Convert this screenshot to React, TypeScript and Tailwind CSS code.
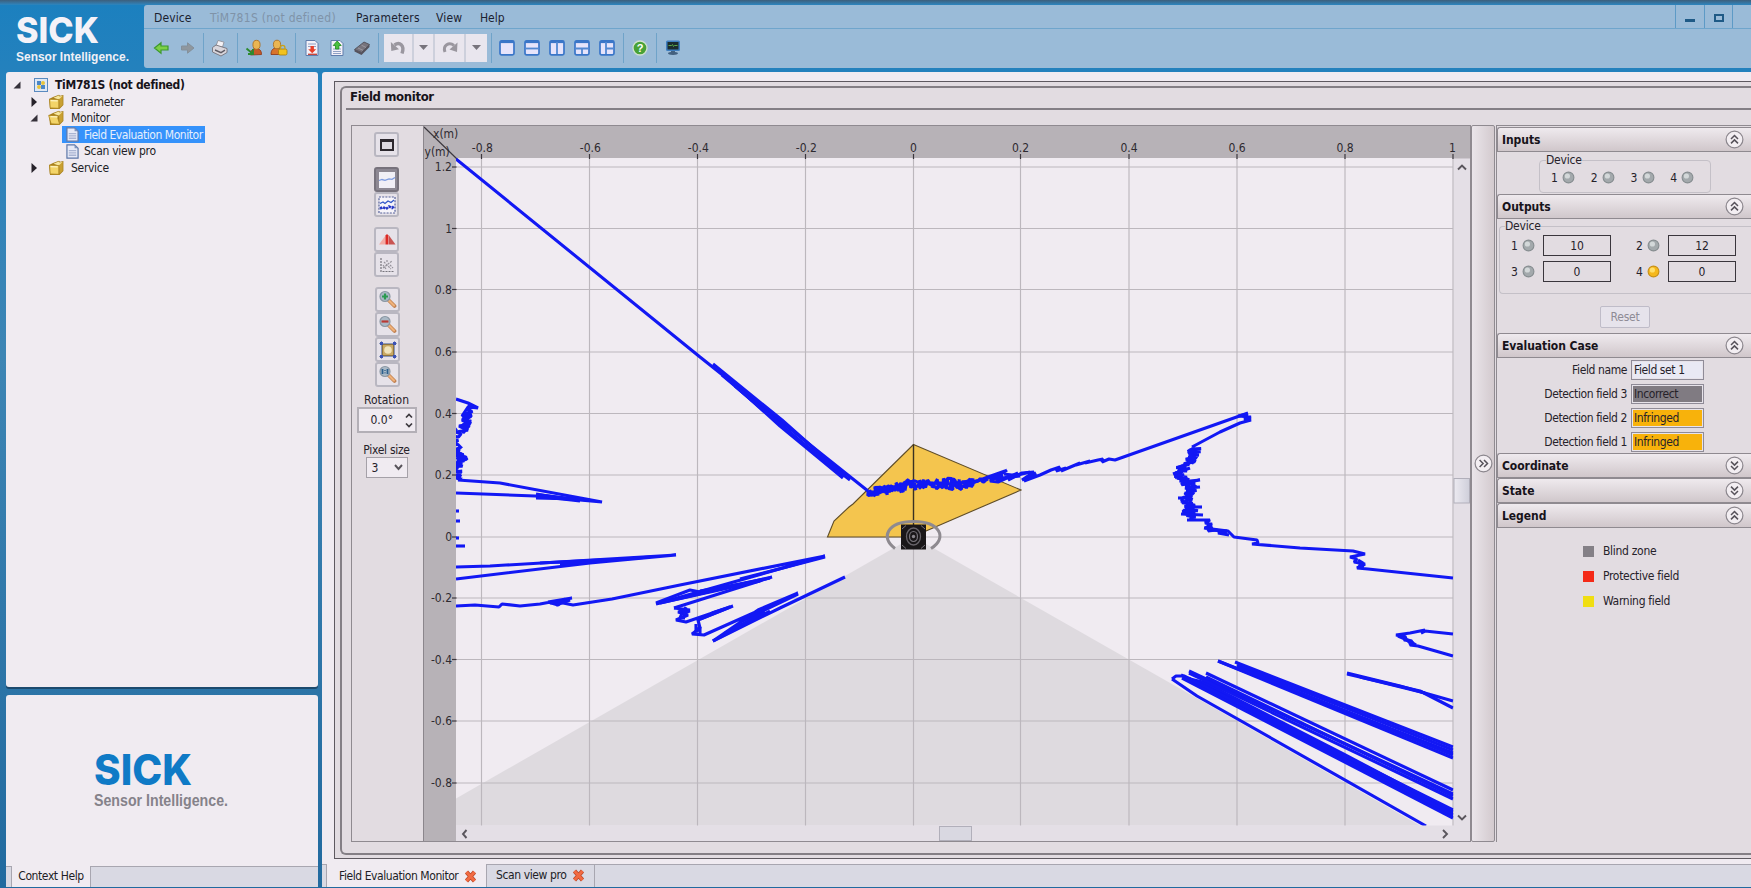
import React from "react";

type P = [number, number];

/* ---------- small building blocks ---------- */

function Ico({ children, size = 18, box = "0 0 18 18" }: { children?: React.ReactNode; size?: number; box?: string }) {
  return (
    <svg width={size} height={size} viewBox={box} fill="none" className="block shrink-0">
      {children}
    </svg>
  );
}

const Folder = ({ open = false }: { open?: boolean }) => (
  <Ico size={16} box="0 0 16 16">
    <path d="M5 3 11 .8l1 1L15.400 1v10L11.500 15H2L1 5z" fill="#a8801c" />
    <path d="M11 3.200 14.700 1.900v9L11.300 13.800z" fill="#c9a032" />
    <path d="M5.500 3.800 10.800 1.600l.7 1 3-.7-3.800 3.600z" fill="#f7e79e" />
    <path d={open ? "M.6 5.400l8.400.2 2.600 8.600-8.400-.4z" : "M1.600 5.200l9.200.3v8.800l-8.600-.4z"} fill="#f3d468" stroke="#a8801c" strokeWidth=".7" />
    <path d="M2.600 6.600l7 .2" stroke="#fdf3c0" strokeWidth="1.200" />
  </Ico>
);

const Doc = () => (
  <svg width="13" height="15" viewBox="0 0 14 16" className="block shrink-0">
    <path d="M1 .8h8.200L13 4.600v10.600H1z" fill="#e6e9f6" stroke="#5d77a8" strokeWidth="1.300" />
    <path d="M9.200.8v3.800H13z" fill="#7d93be" />
    <path d="M3 7h8M3 9.500h8M3 12h8" stroke="#a9b4d2" strokeWidth="1.500" />
  </svg>
);

const Closed = () => (
  <svg width="7" height="10" viewBox="0 0 7 10" className="block shrink-0"><path d="M.5 0 6 5 .5 10z" fill="#26222a" /></svg>
);
const Opened = () => (
  <svg width="8" height="8" viewBox="0 0 8 8" className="block shrink-0"><path d="M7.500.5v7h-7z" fill="#35313a" /></svg>
);

function Sep() {
  return <div className="h-[30px] w-px bg-[#6fa3c9]" />;
}

function LayoutIcon({ d }: { d: string }) {
  return (
    <Ico>
      <rect x="2" y="1.800" width="14" height="14" rx="1.600" fill="#e6e4fb" stroke="#3a76c8" strokeWidth="1.700" />
      <path d="M2 3h14" stroke="#3a76c8" strokeWidth="2.200" />
      <path d={d} stroke="#5288d2" strokeWidth="1.800" />
    </Ico>
  );
}

function Chevrons({ dir }: { dir: "up" | "down" | "right" }) {
  const turn = dir === "up" ? 0 : dir === "down" ? 180 : 90;
  return (
    <svg width="19" height="19" viewBox="0 0 19 19" className="block shrink-0">
      <circle cx="9.500" cy="9.500" r="8.400" fill="#f3eef2" stroke="#8b868d" strokeWidth="1.200" />
      <g transform={`rotate(${turn} 9.5 9.5)`} fill="none" stroke="#57525a" strokeWidth="1.500">
        <path d="M6 9l3.500-3.500L13 9M6 13.400l3.500-3.500 3.500 3.500" />
      </g>
    </svg>
  );
}

function Led({ on = false }: { on?: boolean }) {
  return (
    <svg width="13" height="13" viewBox="0 0 13 13" className="block shrink-0">
      <circle cx="6.500" cy="6.500" r="5.400" fill={on ? "#f5b81c" : "#a3a9ac"} stroke={on ? "#c89018" : "#868d90"} strokeWidth="1.100" />
      <circle cx="5.400" cy="5" r="2.600" fill={on ? "#ffdf6a" : "#d3d8d9"} />
    </svg>
  );
}

function SectionHeader({ title, dir }: { title: string; dir: "up" | "down" }) {
  return (
    <div className="flex h-[25px] shrink-0 items-center rounded-tl-[3px] border border-r-0 border-[#8f8a90] bg-linear-to-b from-[#efeaee] to-[#d0c7cb] pr-[7px] pl-[4px]">
      <span className="flex-1 text-[12px] font-bold tracking-[-0.05px] text-[#17131a]">{title}</span>
      <Chevrons dir={dir} />
    </div>
  );
}

function ToolBtn({ active = false, children }: { active?: boolean; children: React.ReactNode }) {
  return (
    <div
      className={
        active
          ? "flex h-[25px] w-[25px] items-center justify-center rounded-[3px] border-2 border-[#77727c] bg-[#8d8893]"
          : "flex h-[25px] w-[25px] items-center justify-center rounded-[3px] border-2 border-[#b9b7c1] bg-[#e6e2e9]"
      }
    >
      {children}
    </div>
  );
}

/* ---------- header ---------- */

function Header() {
  return (
    <div className="flex h-[63px] shrink-0">
      <div className="w-[144px] pl-[14px]">
        <svg width="124" height="62" className="block">
          <text x="2" y="38" textLength="83" lengthAdjust="spacingAndGlyphs" className="fill-[#f4f2f8] font-[Inter,sans-serif] text-[36px] font-extrabold">SICK</text>
          <text x="2" y="55.500" textLength="113" lengthAdjust="spacingAndGlyphs" className="fill-[#f0f0f6] font-['Liberation_Sans_Narrow','Liberation_Sans',sans-serif] text-[13.500px] font-bold">Sensor Intelligence.</text>
        </svg>
      </div>
      <div className="flex flex-1 flex-col rounded-l-[3px] bg-[#9abbd8]">
        <div className="flex h-[24px] border-b border-[#6fa5cc] pl-[10px]">
          <div className="flex flex-1 items-center pt-[2px] text-[12px] text-[#1b2230]">
            <span className="w-[56px] tracking-[0.1px]">Device</span>
            <span className="w-[146px] tracking-[0.3px] text-[#7f93a8]">TiM781S (not defined)</span>
            <span className="w-[80px] tracking-[0.2px]">Parameters</span>
            <span className="w-[44px] tracking-[0.2px]">View</span>
            <span>Help</span>
          </div>
          <div className="flex w-[76px]">
            <div className="flex w-[29px] items-center justify-center border-l border-[#5d9ac6]"><div className="mt-[7px] h-[3px] w-[10px] bg-[#1f5a86]" /></div>
            <div className="flex w-[29px] items-center justify-center border-x border-[#5d9ac6]"><div className="mt-[2px] h-[8px] w-[10px] border-2 border-[#1f5a86]" /></div>
          </div>
        </div>
        <div className="flex h-[39px] items-center pb-[2px] pl-[9px]">
          <Ico><path d="M1.500 9 8 3.800V7h7v4H8v3.200z" fill="#7dd048" stroke="#3d9a2c" strokeWidth="1.200" /></Ico>
          <div className="w-[7px]" />
          <Ico><path d="M16 9 9.500 3.800V7H3.500v4h6v3.200z" fill="#8f979e" stroke="#84909b" strokeWidth="1" /></Ico>
          <div className="w-[7px]" />
          <Sep />
          <div className="w-[7px]" />
          <Ico>
            <path d="M5 7 7 1.500l6 1.600L11.500 8z" fill="#f4f2f6" stroke="#8c8a92" strokeWidth=".8" />
            <path d="M1.500 8.500 5 6l11 3.500v4L10 17l-8.500-4z" fill="#d9d6dc" stroke="#75737b" strokeWidth=".9" />
            <path d="M4 11l6 2.600 4-2.400" stroke="#5e5c65" strokeWidth="1.400" />
          </Ico>
          <div className="w-[8px]" />
          <Sep />
          <div className="w-[7px]" />
          <Ico>
            <path d="M5.500 16c0-4.500 2-6.500 5.500-6.500s5.500 2 5.500 6z" fill="#c65a28" stroke="#8d3410" strokeWidth=".8" />
            <ellipse cx="11.500" cy="5.800" rx="3.600" ry="4.500" fill="#eab552" stroke="#a8691a" strokeWidth=".8" />
            <path d="M1.500 9.500l6 5M8 10v5H3" stroke="#2c8a2e" strokeWidth="1.900" />
          </Ico>
          <div className="w-[7px]" />
          <Ico>
            <path d="M1 15.500c0-4.500 2-6.500 5.500-6.500s5.500 2 5.500 6.500z" fill="#d8742a" stroke="#8d3410" strokeWidth=".8" />
            <ellipse cx="7" cy="5.500" rx="3.600" ry="4.300" fill="#eab552" stroke="#a8691a" strokeWidth=".8" />
            <rect x="8.500" y="10" width="8.500" height="6" rx="1.500" fill="#f2c21e" stroke="#a57b0a" strokeWidth=".8" />
            <path d="M10.500 10V8.500a2.200 2.200 0 0 1 4.400 0V10" stroke="#c9a11a" strokeWidth="1.300" />
          </Ico>
          <div className="w-[7px]" />
          <Sep />
          <div className="w-[7px]" />
          <Ico>
            <path d="M3 1.500h9l3 3v12H3z" fill="#f3f1f8" stroke="#5f7dac" />
            <path d="M5 5h8M5 7.500h8" stroke="#8fa0c4" />
            <path d="M7.500 7h3.400v3.300h2.300l-4 4-4-4h2.300z" fill="#e8402a" />
            <path d="M5 15.300h9" stroke="#c9463c" strokeWidth="1.400" />
          </Ico>
          <div className="w-[7px]" />
          <Ico>
            <path d="M3 1.500h9l3 3v12H3z" fill="#f3f1f8" stroke="#5f7dac" />
            <path d="M5 10h8M5 12.500h8M5 14.500h8" stroke="#8fa0c4" />
            <path d="M7.500 10V6.500H5.200L9.200 2l4 4.500h-2.300V10z" fill="#4cc040" stroke="#1d8a1c" strokeWidth=".8" />
          </Ico>
          <div className="w-[7px]" />
          <Ico>
            <path d="M1.500 10.500 11 3l5.500 2.500L8.500 13.500z" fill="#77747d" stroke="#4a4750" strokeWidth=".8" />
            <path d="M1.500 10.500v2l7 3.500v-2.500zM8.500 13.500V16l8-8V5.500z" fill="#55525c" />
            <path d="M5 9l5 2.300M8.500 6.200l4.500 2.300" stroke="#9b98a1" />
          </Ico>
          <div className="w-[7px]" />
          <Sep />
          <div className="ml-[5px] flex h-[28px] divide-x-2 divide-[#cdd0dc] bg-[#e9e6ee]">
            <div className="flex w-[30px] items-center justify-center"><Ico><path d="M5.500 6c5-3.500 10.500 0 7.500 8.500" stroke="#9a979f" strokeWidth="3.400" /><path d="M1.800 3 2.300 12l7.700-1.800z" fill="#9a979f" /></Ico></div>
            <div className="flex w-[21px] items-center justify-center"><svg width="9" height="5"><path d="M0 0h9L4.500 5z" fill="#77747c" /></svg></div>
            <div className="flex w-[31px] items-center justify-center"><Ico><path d="M4 13C1.500 6.500 8 2.500 13 6.500" stroke="#9a979f" strokeWidth="3" /><path d="M16.500 3.500 16 13l-7.500-2.600z" fill="#9a979f" /></Ico></div>
            <div className="flex w-[21px] items-center justify-center"><svg width="9" height="5"><path d="M0 0h9L4.500 5z" fill="#77747c" /></svg></div>
          </div>
          <div className="ml-[4px]"><Sep /></div>
          <div className="ml-[6px] flex gap-[7px]">
            <LayoutIcon d="" />
            <LayoutIcon d="M2 9.500h14" />
            <LayoutIcon d="M9 3v12" />
            <LayoutIcon d="M2 9.500h14M9 9.500V15" />
            <LayoutIcon d="M8 3v12M8 9.500h8" />
          </div>
          <div className="ml-[7px]"><Sep /></div>
          <div className="ml-[7px]">
            <Ico>
              <circle cx="9" cy="9" r="7" fill="#48a236" stroke="#cfe0d0" strokeWidth="1.300" />
              <text x="9" y="13" textAnchor="middle" className="fill-white font-['Liberation_Sans',sans-serif] text-[11px] font-bold">?</text>
            </Ico>
          </div>
          <div className="ml-[7px]"><Sep /></div>
          <div className="ml-[7px]">
            <Ico>
              <rect x="2" y="1.500" width="14" height="10.500" rx="1.500" fill="#3f7fc0" />
              <rect x="3.500" y="3" width="11" height="7.500" fill="#1b2b2e" />
              <path d="M4.500 6.500h3l1-1 1 2 1-1h3" stroke="#58a84a" />
              <path d="M7 12h4v1c4 0 4.500 3-2 3s-6-3-2-3z" fill="#44617f" />
            </Ico>
          </div>
        </div>
      </div>
    </div>
  );
}

/* ---------- left column ---------- */

function Sidebar() {
  return (
    <div className="ml-[6px] flex w-[312px] shrink-0 flex-col">
      <div className="flex h-[615px] flex-col rounded-[3px] bg-[#f0ebf1] pt-[4px] text-[12px] tracking-[-0.3px] text-[#211d26] shadow-[0_2px_0_#1c4a6e]">
        <div className="flex h-[17px] items-center pl-[7px]">
          <Opened />
          <div className="mr-[7px] ml-[13px] flex h-[14px] w-[14px] shrink-0 flex-wrap border border-[#5a8abf] bg-[#dfe8f4] p-[2px]">
            <div className="h-[4px] w-[4px] bg-[#4a86c8]" /><div className="h-[4px] w-[4px] rounded-full bg-[#e9c43a]" />
            <div className="h-[4px] w-[4px] rounded-full bg-[#e9c43a]" /><div className="h-[4px] w-[4px] bg-[#4a86c8]" />
          </div>
          <span className="font-bold text-[#17131a]">TiM781S (not defined)</span>
        </div>
        <div className="flex h-[17px] items-center pl-[25px]"><Closed /><span className="w-[10px]" /><Folder /><span className="ml-[7px]">Parameter</span></div>
        <div className="flex h-[16px] items-center pl-[24px]"><Opened /><span className="w-[10px]" /><Folder open /><span className="ml-[7px]">Monitor</span></div>
        <div className="ml-[56px] flex h-[17px] w-[143px] items-center bg-[#3592fb] pl-[4px] text-[#e6effc]"><Doc /><span className="ml-[5px] tracking-[-0.46px] whitespace-nowrap">Field Evaluation Monitor</span></div>
        <div className="ml-[56px] flex h-[16px] items-center pl-[4px]"><Doc /><span className="ml-[5px]">Scan view pro</span></div>
        <div className="flex h-[17px] items-center pl-[25px]"><Closed /><span className="w-[10px]" /><Folder /><span className="ml-[7px]">Service</span></div>
      </div>
      <div className="mt-[8px] flex h-[192px] flex-col rounded-[3px] bg-[#f0ebf1]">
        <div className="flex-1 pt-[52px] pl-[87px]">
          <svg width="150" height="70" className="block">
            <text x="1" y="38" textLength="98" lengthAdjust="spacingAndGlyphs" className="fill-[#0f7ac6] font-[Inter,sans-serif] text-[42px] font-extrabold">SICK</text>
            <text x="1" y="59" textLength="134" lengthAdjust="spacingAndGlyphs" className="fill-[#85828a] font-['Liberation_Sans_Narrow','Liberation_Sans',sans-serif] text-[16px] font-bold">Sensor Intelligence.</text>
          </svg>
        </div>
        <div className="flex h-[21px] bg-[#d9d9e3]">
          <div className="w-[6px] border-t border-r border-[#a8a6b0]" />
          <div className="flex w-[79px] items-center justify-center border-r border-[#a8a6b0] bg-[#f0ebf1] pb-[2px] text-[12px] tracking-[-0.4px] whitespace-nowrap text-[#211d26]">Context Help</div>
          <div className="flex-1 border-t border-[#a8a6b0]" />
        </div>
      </div>
    </div>
  );
}

/* ---------- plot ---------- */

/* Deterministic pseudo random source for the scan jitter. */
function source(seed: number) {
  let s = seed;
  return () => {
    s = (s * 16807) % 2147483647;
    return s / 2147483647 - 0.5;
  };
}

function jitter(base: P[], steps: number, ax: number, ay: number, seed: number): string {
  const r = source(seed * 7919);
  r();
  const out: string[] = [];
  for (let i = 0; i < base.length - 1; i++) {
    for (let k = 0; k < steps; k++) {
      const t = k / steps;
      const x = base[i][0] + (base[i + 1][0] - base[i][0]) * t + r() * ax;
      const y = base[i][1] + (base[i + 1][1] - base[i][1]) * t + r() * ay;
      out.push(`${x.toFixed(1)},${y.toFixed(1)}`);
    }
  }
  const e = base[base.length - 1];
  out.push(`${e[0]},${e[1]}`);
  return out.join(" ");
}

const xTicks: [number, string][] = [
  [481.5, "-0.8"], [589.5, "-0.6"], [697.5, "-0.4"], [805.5, "-0.2"], [913.5, "0"], [1020.5, "0.2"], [1129, "0.4"], [1237, "0.6"], [1345, "0.8"], [1453, "1"],
];
const yTicks: [number, string][] = [
  [167, "1.2"], [228.5, "1"], [289.5, "0.8"], [352, "0.6"], [413.5, "0.4"], [475, "0.2"], [537, "0"], [598, "-0.2"], [659.5, "-0.4"], [721, "-0.6"], [783, "-0.8"],
];

const traces: string[] = [
  /* wall on the upper left */
  "456,159 700,357 868,491",
  "713,364 782,420 845,476",
  "722,375 780,424 843,477",
  "728,379 780,426 843,478",
  "735,386 790,433 850,480",
  /* target across the warning field */
  jitter([[868, 491], [878, 492], [895, 489], [913, 484], [945, 483], [958, 486], [975, 482]], 18, 5, 12, 7),
  jitter([[874, 492], [890, 490], [905, 486], [925, 484], [950, 484], [970, 483]], 18, 5, 10, 91),
  jitter([[872, 492], [892, 490]], 14, 6, 9, 17),
  jitter([[970, 482], [988, 479]], 8, 4, 5, 19),
  "975,482 988,477 1005,471 994,479 1007,470 990,481 998,482 1018,473 1008,480 1022,473 1034,472 1022,480 1036,473 1024,481 1040,475 1051,470 1060,467 1056,471 1066,468 1061,471 1080,463 1076,465 1090,461 1085,463 1098,460 1103,459 1102,462 1109,459 1115,460 1248,413",
  "1004,474 1020,476 1010,477 1030,472",
  "988,478 1003,476 996,480 1015,475",
  "1248,414 1238,416 1251,417 1244,419 1251,420 1240,423 1220,432 1192,447",
  jitter([[1196, 448], [1194, 455], [1190, 461], [1184, 467], [1179, 473], [1179, 478]], 10, 13, 3, 23),
  jitter([[1190, 449], [1193, 460], [1178, 468], [1178, 478]], 12, 9, 2, 29),
  jitter([[1182, 478], [1189, 484], [1188, 496], [1190, 508], [1192, 515]], 14, 17, 3, 55),
  jitter([[1183, 478], [1189, 484], [1188, 496], [1190, 508], [1192, 519]], 14, 10, 2, 61),
  "1173,474 1190,468", "1190,481 1200,480 1188,482", "1186,488 1200,487", "1178,498 1192,498", "1190,507 1202,507", "1181,514 1203,515",
  "1187,520 1210,520 1205,523 1212,524 1205,528 1212,527 1210,530 1227,531 1218,533 1229,535",
  "1206,522 1211,526 1208,531 1216,530 1227,534",
  "1204,528 1228,531 1234,537 1257,540 1258,543 1252,544 1300,548 1353,551 1365,554 1350,557 1357,559 1354,562 1365,564 1357,568 1368,569 1453,578",
  "1358,560 1363,563 1359,566 1364,567",
  /* left edge */
  "456,399 468,403 478,408 468,407 462,416 472,415 462,420 470,424 459,426 468,430 456,432",
  jitter([[469, 406], [467, 415], [467, 424], [462, 432]], 12, 10, 2, 33),
  jitter([[457, 430], [457, 450], [460, 457], [463, 459], [458, 470], [459, 479]], 14, 10, 3, 44),
  jitter([[457, 450], [461, 458], [457, 466]], 12, 10, 2, 47),
  "458,480 500,483 602,502 535,496 456,493",
  "536,494 580,501 545,497 590,500", "536,498 575,499 540,495",
  "456,511 459,511", "456,521 460,521", "456,538 459,538", "456,546 465,546",
  "456,567 490,566 676,555 590,563 456,579",
  "540,563 600,560 560,564 650,557",
  "456,606 475,605 499,607 502,604 520,606 540,604 572,598 548,602 558,605 565,599 558,602 573,605 612,599 680,585 825,556 656,604 772,577 674,608",
  "550,603 570,600 556,605", "740,579 825,557", "656,603 690,590 700,592 770,578", "700,591 760,581 660,603",
  "674,608 690,610 678,612 688,615 676,620 686,622 733,606 698,620 700,628 692,634 704,635 798,593 758,610 713,641",
  "680,612 684,609 680,618 685,618", "686,607 683,613 690,611", "712,613 730,607 700,619",
  "696,624 696,632 700,627 700,634",
  "713,641 780,608 845,577", "742,621 798,594", "713,641 770,611", "725,633 765,612",
  /* lower right */
  "1453,634 1425,631 1421,633 1425,630 1410,633 1396,635 1406,637 1404,640 1412,641 1410,645 1418,646 1453,656",
  "1398,636 1412,642 1408,640 1416,645", "1404,637 1410,643 1414,643",
  "1347,673 1400,686 1453,701", "1347,674 1420,691 1453,708", "1360,677 1425,693",
  "1218,661 1453,753", "1235,662 1453,747", "1218,661 1453,758", "1237,665 1453,750", "1237,667 1453,755",
  "1206,673 1453,790", "1189,671 1453,794", "1189,673 1453,799", "1206,677 1453,796",
  "1172,679 1176,676 1184,676 1453,812", "1181,675 1453,815", "1182,678 1453,818", "1188,678 1453,810",
  "1172,679 1197,696 1426,826",
];

function Plot() {
  return (
    <svg width="1047" height="715" viewBox="423 126 1047 715" className="block shrink-0">
      <defs>
        <clipPath id="area"><rect x="456" y="158" width="997.500" height="667.500" /></clipPath>
        <linearGradient id="vthumb" x1="0" x2="1" y1="0" y2="0"><stop offset="0" stopColor="#eceaf1" /><stop offset="1" stopColor="#cfcfda" /></linearGradient>
      </defs>
      <rect x="423" y="126" width="1047" height="715" fill="#e4dfe6" />
      <rect x="423" y="126" width="1047" height="32.500" fill="#b7b2b7" />
      <rect x="423" y="126" width="33" height="715" fill="#b7b2b7" />
      <rect x="456" y="158" width="997.500" height="667.500" fill="#f0ebf1" />
      <path d="M913.500 536.700 456 798.500V825.500H1420z" fill="#dedadf" />
      <g stroke="#bcb7bd" strokeWidth="1.150">
        {xTicks.map(([x]) => <path key={x} d={`M${x} 158V825.500`} />)}
        {yTicks.map(([y]) => <path key={y} d={`M456 ${y}H1453`} />)}
      </g>
      <g stroke="#3c383e" strokeWidth="1.200">
        {xTicks.map(([x]) => <path key={x} d={`M${x} 154V159`} />)}
        {yTicks.map(([y]) => <path key={y} d={`M452 ${y}H456.500`} />)}
        <path d="M424 127 457 159" />
      </g>
      <g className="fill-[#2e2a30] text-[12px]">
        {xTicks.map(([x, t]) => (
          <text key={t} x={x + (t === "1" ? -0.5 : t.length > 3 ? 0.8 : 0)} y="151.500" textAnchor="middle">{t}</text>
        ))}
        {yTicks.map(([y, t]) => <text key={t} x="452" y={y + 4} textAnchor="end">{t}</text>)}
        <text x="433" y="137.500">x(m)</text>
        <text x="424.500" y="156">y(m)</text>
      </g>
      <path d="M913.500 444.500 1021 490 926 531 913.500 537H827.500L834 521 849 507 853 504z" fill="#f4c54e" stroke="#5f4d28" strokeWidth="1.100" />
      <path d="M913.500 444.500V536" stroke="#3a3222" strokeWidth="1.400" />
      <g clipPath="url(#area)" fill="none" stroke="#1218f4" strokeWidth="3.100" strokeLinejoin="bevel">
        <path d="M1184 676 1205 681 1345 753 1453 810V817L1345 763 1195 682z" fill="#1218f4" stroke="none" />
        {traces.map((d, i) => <polyline key={i} points={d} />)}
      </g>
      <path d="M895 548.500C880 538 887 521.500 913.500 521.500S948 538 931 548.500" fill="none" stroke="#8e8a90" strokeWidth="3" />
      <rect x="901" y="524.500" width="25" height="25" fill="#1a1719" />
      <path d="M902 529l4-3.500M925 529l-4-3.500M902 545l4 3.500M925 545l-4 3.500" stroke="#77737a" strokeWidth="1" />
      <ellipse cx="913.500" cy="536.500" rx="7" ry="8.500" fill="none" stroke="#68646a" strokeWidth="1.300" />
      <ellipse cx="913.500" cy="536.500" rx="4" ry="5" fill="none" stroke="#77737a" strokeWidth="1.200" />
      <circle cx="913.500" cy="536.500" r="1.700" fill="#8a868c" />
      {/* scroll bars */}
      <g fill="none" stroke="#5a565d" strokeWidth="1.900">
        <path d="M1458 169.500 1462 165.500 1466 169.500M1458 815.500 1462 819.500 1466 815.500M466.500 830 463 834 466.500 838M1443 830 1447 834 1443 838" />
      </g>
      <rect x="1454" y="478.500" width="15.500" height="24.500" fill="url(#vthumb)" stroke="#b1afba" />
      <rect x="939.500" y="826.500" width="32" height="14" fill="#d9d8e1" stroke="#b1afba" />
      <path d="M423.500 126V841" stroke="#8b868c" />
    </svg>
  );
}

/* ---------- tool palette ---------- */

const Lens = ({ children }: { children?: React.ReactNode }) => (
  <Ico size={19} box="0 0 19 19">
    <path d="M11 10.500 16.500 16" stroke="#c08050" strokeWidth="3.800" strokeLinecap="round" />
    <path d="M11 10.500 16 15.500" stroke="#f0b27a" strokeWidth="2.200" strokeLinecap="round" />
    <circle cx="7" cy="6.500" r="5" fill="#aab9c6" stroke="#8a97a3" strokeWidth="1.200" />
    {children}
  </Ico>
);

function Palette() {
  return (
    <div className="flex w-[71px] shrink-0 flex-col items-center pt-[6px] pr-[2px] text-[12px] text-[#26222a]">
      <ToolBtn><div className="h-[12px] w-[14px] border-2 border-t-[3px] border-[#2c282e] bg-[#dcd9e0]" /></ToolBtn>
      <div className="mt-[10px] flex flex-col">
        <ToolBtn active>
          <Ico><rect x="1" y="1" width="16" height="16" fill="#f1eff6" /><path d="M1 9.500l3-1 3 .8 4-1.500 3 .5 3-1.800" stroke="#7d9be0" strokeWidth="1.300" /></Ico>
        </ToolBtn>
        <ToolBtn>
          <Ico><rect x="1" y="1" width="16" height="16" fill="#f6f4fa" stroke="#54609a" strokeWidth="1.200" strokeDasharray="2 1.200" /><path d="M2 7.500l3-1.500 2 1.500 3-2.500 3 1.500 3-2.500" stroke="#2f56c8" strokeWidth="1.300" /><path d="M2 12.500l3-1.500 3 2 3-2.500 3 1.500 2.500-2" stroke="#2638c8" strokeWidth="2.600" strokeDasharray="2.500 1" /></Ico>
        </ToolBtn>
      </div>
      <div className="mt-[10px] flex flex-col">
        <ToolBtn>
          <Ico><path d="M7.500 4.500 1 13.500h6.500z" fill="#f3aba5" /><path d="M7.500 4.500l1.500-1.500 1.500 1.500v9h-3z" fill="#dc2a26" /><path d="M11 4.500l6.500 9H11z" fill="#c95452" /></Ico>
        </ToolBtn>
        <ToolBtn>
          <Ico><path d="M3 2v13.500h13" stroke="#77757c" strokeWidth="1.200" strokeDasharray="2 1" /><path d="M5 12 14 5M6 6l7 7M9 4v3M12 9l3 3M5 9l3 4" stroke="#96939b" strokeWidth="1.200" strokeDasharray="2 1" /></Ico>
        </ToolBtn>
      </div>
      <div className="mt-[10px] ml-[2px] flex flex-col">
        <ToolBtn><Lens><path d="M4 6.500h6M7 3.500v6" stroke="#2a9a50" strokeWidth="2.200" /></Lens></ToolBtn>
        <ToolBtn><Lens><path d="M3.500 6.500h7" stroke="#b83a34" strokeWidth="2.200" /></Lens></ToolBtn>
        <ToolBtn>
          <Ico><path d="M2.500 0v18M15.500 0v18M0 2.500h18M0 15.500h18" stroke="#8e99ba" strokeWidth="1" /><rect x="3.500" y="3.500" width="11" height="11" fill="#c9a964" stroke="#8d7440" /><circle cx="9" cy="9" r="3.800" fill="#f0e4bc" /><path d="M1 1h3v3H1zM14 1h3v3h-3zM1 14h3v3H1zM14 14h3v3h-3z" fill="#3b52b5" /></Ico>
        </ToolBtn>
        <ToolBtn><Lens><path d="M4.500 4v5M9.500 4v5M7 5v.8M7 7.500v.8" stroke="#2c5f8c" strokeWidth="1.800" /></Lens></ToolBtn>
      </div>
      <span className="mt-[5px] h-[16px] leading-[16px]">Rotation</span>
      <div className="mt-[-1px] flex h-[26px] w-[60px] items-center border-2 border-[#b3afb6] bg-[#f0ebf1] pl-[12px]">
        <span className="w-[34px]">0.0°</span>
        <svg width="8" height="15" viewBox="0 0 8 15" fill="none" stroke="#3c383e" strokeWidth="1.700"><path d="M1 4.500l3-3 3 3M1 10.500l3 3 3-3" /></svg>
      </div>
      <span className="mt-[9px] h-[16px] tracking-[-0.3px] leading-[16px]">Pixel size</span>
      <div className="mt-[-1px] flex h-[21px] w-[42px] items-center border border-[#a5a1a8] bg-[#f0ebf1] pl-[5px]">
        <span className="w-[22px]">3</span>
        <svg width="9" height="7" viewBox="0 0 9 7" fill="none" stroke="#57535a" strokeWidth="1.900"><path d="M1 1l3.500 4L8 1" /></svg>
      </div>
    </div>
  );
}

/* ---------- right panel ---------- */

function Output({ n, value, on = false, wide }: { n: string; value: string; on?: boolean; wide: string }) {
  return (
    <div className={`flex items-center ${wide}`}>
      <span className="w-[9px]">{n}</span>
      <div className="ml-[2px]"><Led on={on} /></div>
      <div className="ml-[8px] flex h-[21px] w-[68px] items-center justify-center border border-[#3a363c]">{value}</div>
    </div>
  );
}

function CaseRow({ label, value, tone }: { label: string; value: string; tone: string }) {
  return (
    <div className="flex h-[20px] items-center tracking-[-0.4px]">
      <span className="w-[130px] text-right">{label}</span>
      <div className="ml-[4px] h-[20px] w-[73px] border border-[#8f8b97] bg-[#e7e3ea] p-px">
        <div className={`flex h-full items-center pl-px ${tone}`}>{value}</div>
      </div>
    </div>
  );
}

function RightPanel() {
  return (
    <div className="ml-px flex flex-1 flex-col border-t border-l border-[#8f8a90] pt-px text-[12px] text-[#26222a]">
      <SectionHeader title="Inputs" dir="up" />
      <div className="h-[42px] pt-[8px] pl-[42px]">
        <div className="flex h-[33px] w-[172px] flex-col rounded-[4px] border border-[#c4c0c7] pl-[6px]">
          <span className="mt-[-8px] h-[15px] w-[36px] bg-[#e2dce1] tracking-[-0.2px] leading-[15px]">Device</span>
          <div className="mt-px flex h-[17px] items-center pl-[5px]">
            {["1", "2", "3", "4"].map((n) => (
              <div key={n} className="flex w-[40.500px] items-center"><span className="w-[11px]">{n}</span><Led /></div>
            ))}
          </div>
        </div>
      </div>
      <SectionHeader title="Outputs" dir="up" />
      <div className="h-[114px] pt-[7px] pl-[2px]">
        <div className="h-[68px] rounded-l-[4px] border border-r-0 border-[#c4c0c7]">
          <div className="mt-[-8px] ml-[5px] h-[16px] w-[36px] bg-[#e2dce1] tracking-[-0.2px] leading-[15px]">Device</div>
          <div className="flex pl-[11px]"><Output n="1" value="10" wide="w-[125px]" /><Output n="2" value="12" wide="w-[110px]" /></div>
          <div className="mt-[5px] flex pl-[11px]"><Output n="3" value="0" wide="w-[125px]" /><Output n="4" value="0" on wide="w-[110px]" /></div>
        </div>
        <div className="mt-[12px] ml-[101px] flex h-[22px] w-[50px] items-center justify-center rounded-[2px] border border-[#bfbcc8] bg-[#e6e3eb] tracking-[-0.2px] text-[#8e8b95]">Reset</div>
      </div>
      <SectionHeader title="Evaluation Case" dir="up" />
      <div className="flex h-[95px] flex-col gap-[4px] pt-[2px]">
        <CaseRow label="Field name" value="Field set 1" tone="bg-[#e9e9f4]" />
        <CaseRow label="Detection field 3" value="Incorrect" tone="bg-[#807b82]" />
        <CaseRow label="Detection field 2" value="Infringed" tone="bg-[#f8b20b]" />
        <CaseRow label="Detection field 1" value="Infringed" tone="bg-[#f8b20b]" />
      </div>
      <SectionHeader title="Coordinate" dir="down" />
      <SectionHeader title="State" dir="down" />
      <SectionHeader title="Legend" dir="up" />
      <div className="flex flex-col gap-[9px] pt-[15px] pl-[86px] tracking-[-0.3px]">
        <div className="flex h-[16px] items-center gap-[9px]"><div className="h-[11px] w-[11px] bg-[#848086]" />Blind zone</div>
        <div className="flex h-[16px] items-center gap-[9px]"><div className="h-[11px] w-[11px] bg-[#f42a18]" />Protective field</div>
        <div className="flex h-[16px] items-center gap-[9px]"><div className="h-[11px] w-[11px] bg-[#f0de12]" />Warning field</div>
      </div>
    </div>
  );
}

/* ---------- main area ---------- */

const CloseX = () => (
  <svg width="13" height="13" viewBox="0 0 13 13" className="block shrink-0"><path d="M2.500 2l8 9M10.500 2l-8 9" stroke="#b8482a" strokeWidth="4.200" /><path d="M2.500 2l8 9M10.500 2l-8 9" stroke="#f26a42" strokeWidth="2.800" /></svg>
);

function Main() {
  return (
    <div className="ml-[4px] flex h-[815px] flex-1 flex-col rounded-tl-[3px] bg-[#f0ebf1]">
      <div className="mt-[9px] ml-[12px] h-[778px] shrink-0 border border-r-0 border-[#5e5960] bg-[#e2dce1] pt-[4px] pl-[5px]">
        <div className="h-[769px] rounded-l-[6px] border-2 border-r-0 border-[#847f85]">
          <div className="ml-[4px] h-[22px] border-b-2 border-[#847f85] pl-[4px] text-[13px] leading-[17px] font-bold tracking-[-0.35px] text-[#17131a]">Field monitor</div>
          <div className="mt-[15px] ml-[9px] flex h-[717px]">
            <div className="flex h-[717px] shrink-0 border border-[#8f8a90]">
              <Palette />
              <Plot />
            </div>
            <div className="flex h-[717px] w-[24px] shrink-0 items-center justify-center rounded-[2px] border border-[#8f8a90] bg-linear-to-r from-[#eae5ea] to-[#d3cace]">
              <div className="mt-[-41px]"><Chevrons dir="right" /></div>
            </div>
            <RightPanel />
          </div>
        </div>
      </div>
      <div className="mt-[5px] flex h-[23px] bg-[#d9d9e3] text-[12px] whitespace-nowrap text-[#211d26]">
        <div className="w-[5px] border-t border-r border-[#a8a6b0]" />
        <div className="flex w-[160px] items-center border-r border-[#a8a6b0] bg-[#f0ebf1] pt-px pl-[12px]"><span className="w-[125px] tracking-[-0.43px]">Field Evaluation Monitor</span><CloseX /></div>
        <div className="flex w-[108px] items-center border-t border-r border-[#a8a6b0] pb-[2px] pl-[9px]"><span className="w-[76px] tracking-[-0.4px]">Scan view pro</span><CloseX /></div>
        <div className="flex-1 border-t border-[#a8a6b0]" />
      </div>
    </div>
  );
}

export default function App() {
  return (
    <div className="flex h-[888px] w-[1751px] flex-col overflow-hidden bg-linear-to-b from-[#1b80bf] via-[#3d85b4] via-40% to-[#216a9f] font-['DejaVu_Sans_Condensed','DejaVu_Sans',sans-serif] [font-stretch:condensed]">
      <div className="h-[5px] shrink-0 bg-linear-to-b from-[#3c5f7c] to-[#2a86c0]" />
      <Header />
      <div className="mt-[4px] flex h-[816px]">
        <Sidebar />
        <Main />
      </div>
    </div>
  );
}
